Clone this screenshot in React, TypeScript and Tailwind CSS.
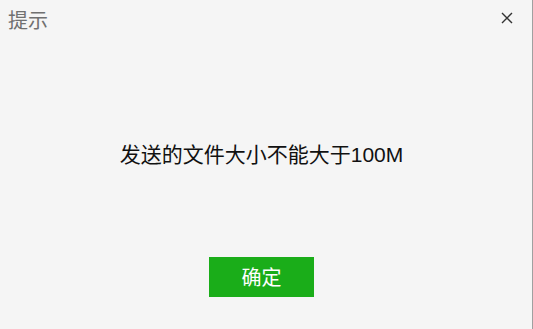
import React from 'react';

export default function App() {
  return (
    <div
      className="w-[533px] h-[329px] bg-[#f5f5f5] border-r border-[#a0a0a0] flex flex-col"
      style={{ fontFamily: '"Noto Sans CJK SC", "Liberation Sans", sans-serif' }}
    >
      {/* 标题栏 */}
      <div className="flex justify-between items-start h-[40px]">
        <span className="ml-[8px] mt-[6px] text-[20px] leading-[28px] text-[#707070]">提示</span>
        <button className="mr-[18px] mt-[11px] w-[14px] h-[14px] flex items-center justify-center">
          <svg width="12" height="12" viewBox="0 0 12 12">
            <path d="M1 1 L11 11 M11 1 L1 11" stroke="#333" strokeWidth="1.4" fill="none" />
          </svg>
        </button>
      </div>

      {/* 内容 */}
      <div className="flex justify-center pr-[9px] mt-[98px]">
        <p className="text-[21px] leading-[30px] text-[#111]">
          发送的文件大小不能大于
          <span style={{ fontFamily: '"Liberation Sans", sans-serif' }}>100M</span>
        </p>
      </div>

      {/* 按钮 */}
      <div className="flex justify-center pr-[9px] mt-[87px]">
        <button className="w-[105px] h-[40px] bg-[#1aad19] text-white text-[20px] leading-[40px]">
          确定
        </button>
      </div>
    </div>
  );
}
